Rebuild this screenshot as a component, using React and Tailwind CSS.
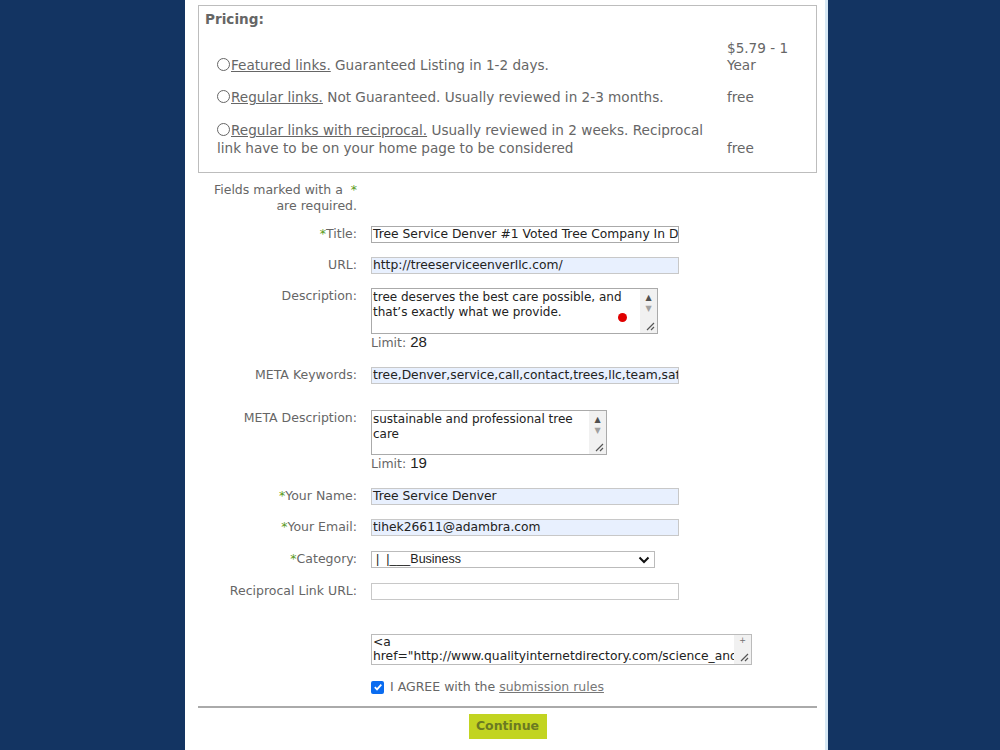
export default function App() {
    const font = { fontFamily: '"DejaVu Sans", Verdana, sans-serif' }
    const arial = { fontFamily: '"Liberation Sans", Arial, sans-serif' }
    const req = <span className="text-[#5a9a1a]">*</span>

    const Row = ({ label, children, className = '' }) => (
        <div className={`flex items-start ${className}`}>
            <div className="w-[161px] shrink-0 pr-[2px] text-right text-[12.5px] text-[#666] leading-[16px]">{label}</div>
            <div className="ml-[12px]">{children}</div>
        </div>
    )

    const Radio = () => (
        <span className="inline-block w-[13px] h-[13px] rounded-full border border-[#666] align-[-1px] mr-[1px]"></span>
    )

    const ScrollBar = () => (
        <>
            <div className="absolute right-0 top-0 bottom-0 w-[17px] bg-[#f1f1f1] flex flex-col items-center pt-[3px] text-[#a0a0a0] text-[8px] leading-[11px]">
                <span className="text-[#505050]">▲</span>
                <span>▼</span>
            </div>
            <svg className="absolute right-[2px] bottom-[2px]" width="10" height="10" viewBox="0 0 10 10">
                <path d="M9 2 L2 9 M9 6 L6 9" stroke="#555" strokeWidth="1.2" />
            </svg>
        </>
    )

    return (
        <div className="min-h-[750px] bg-[#133462] flex" style={font}>
            <div className="ml-[185px] w-[643px] bg-white border-r-[3px] border-[#d6e8f5] pl-[13px] pr-[8px] pt-[5px] pb-[20px]">
                <div className="border border-[#bdbdbd] px-[6px] pt-[5px] pb-[15px] text-[13.6px] text-[#666]">
                    <div className="font-bold leading-[16px]">Pricing:</div>
                    <div className="mt-[13px] flex flex-col gap-[15px]">
                        <div className="flex items-end pl-[12px] leading-[17px]">
                            <div className="w-[510px]">
                                <Radio />
                                <span className="underline">Featured links.</span> Guaranteed Listing in 1-2 days.
                            </div>
                            <div className="w-[80px]">$5.79 - 1<br />Year</div>
                        </div>
                        <div className="flex items-end pl-[12px] leading-[17px]">
                            <div className="w-[510px]">
                                <Radio />
                                <span className="underline">Regular links.</span> Not Guaranteed. Usually reviewed in 2-3 months.
                            </div>
                            <div className="w-[80px]">free</div>
                        </div>
                        <div className="flex items-end pl-[12px] leading-[18px]">
                            <div className="w-[510px]">
                                <Radio />
                                <span className="underline">Regular links with reciprocal.</span> Usually reviewed in 2 weeks. Reciprocal<br />
                                link have to be on your home page to be considered
                            </div>
                            <div className="w-[80px]">free</div>
                        </div>
                    </div>
                </div>

                <div className="mt-[9px] w-[161px] pr-[2px] text-right text-[12.5px] text-[#666] leading-[16px] whitespace-pre">
                    {'Fields marked with a  '}{req}<br />are required.
                </div>

                <div className="mt-[12px] flex flex-col">
                    <Row label={<>{req}Title:</>}>
                        <div className="w-[308px] h-[17px] border border-[#aaa] bg-white text-[12.3px] text-[#222] px-[1px] leading-[15px] overflow-hidden whitespace-nowrap">Tree Service Denver #1 Voted Tree Company In Denver</div>
                    </Row>
                    <Row label="URL:" className="mt-[14px]">
                        <div className="w-[308px] h-[17px] border border-[#c8c8c8] bg-[#e8f0fe] text-[12.3px] text-[#222] px-[1px] leading-[15px] overflow-hidden whitespace-nowrap">http://treeserviceenverllc.com/</div>
                    </Row>
                    <Row label="Description:" className="mt-[14px]">
                        <div className="relative w-[287px] h-[46px] border border-[#aaa] bg-white text-[12px] text-[#222] pl-[1px] pr-[20px] pt-[1px] leading-[15px]">
                            tree deserves the best care possible, and that’s exactly what we provide.
                            <span className="absolute left-[246px] top-[24px] w-[9px] h-[9px] rounded-full bg-[#e00000]"></span>
                            <ScrollBar />
                        </div>
                        <div className="text-[12.5px] text-[#666] leading-[16px]">Limit: <span className="text-[15px] text-[#222]" style={arial}>28</span></div>
                    </Row>
                    <Row label="META Keywords:" className="mt-[16px]">
                        <div className="w-[308px] h-[17px] border border-[#c8c8c8] bg-[#e8f0fe] text-[12.3px] text-[#222] px-[1px] leading-[15px] overflow-hidden whitespace-nowrap">tree,Denver,service,call,contact,trees,llc,team,safety</div>
                    </Row>
                    <Row label="META Description:" className="mt-[26px]">
                        <div className="relative w-[236px] h-[45px] border border-[#aaa] bg-white text-[12px] text-[#222] pl-[1px] pr-[20px] pt-[1px] leading-[15px]">
                            sustainable and professional tree care
                            <ScrollBar />
                        </div>
                        <div className="text-[12.5px] text-[#666] leading-[16px]">Limit: <span className="text-[15px] text-[#222]" style={arial}>19</span></div>
                    </Row>
                    <Row label={<>{req}Your Name:</>} className="mt-[16px]">
                        <div className="w-[308px] h-[17px] border border-[#c8c8c8] bg-[#e8f0fe] text-[12.3px] text-[#222] px-[1px] leading-[15px] overflow-hidden whitespace-nowrap">Tree Service Denver</div>
                    </Row>
                    <Row label={<>{req}Your Email:</>} className="mt-[14px]">
                        <div className="w-[308px] h-[17px] border border-[#c8c8c8] bg-[#e8f0fe] text-[12.3px] text-[#222] px-[1px] leading-[15px] overflow-hidden whitespace-nowrap">tihek26611@adambra.com</div>
                    </Row>
                    <Row label={<>{req}Category:</>} className="mt-[15px]">
                        <div className="w-[284px] h-[17px] border border-[#bbb] bg-white text-[12.5px] text-[#222] pl-[4px] pr-[4px] leading-[15px] flex items-center justify-between" style={arial}>
                            <span className="whitespace-pre">|  |___Business</span>
                            <svg width="12" height="8" viewBox="0 0 12 8">
                                <path d="M1.5 1.5 L6 6 L10.5 1.5" stroke="#111" strokeWidth="2" fill="none" />
                            </svg>
                        </div>
                    </Row>
                    <Row label="Reciprocal Link URL:" className="mt-[15px]">
                        <div className="w-[308px] h-[17px] border border-[#c8c8c8] bg-white"></div>
                    </Row>
                    <Row label="" className="mt-[34px]">
                        <div className="relative w-[381px] h-[31px] border border-[#bbb] bg-white text-[12.3px] text-[#222] pl-[1px] pr-[22px] leading-[14px] overflow-hidden">
                            &lt;a<br />
                            <span className="whitespace-nowrap">href="http://www.qualityinternetdirectory.com/science_and_technology/"</span>
                            <div className="absolute right-0 top-0 bottom-0 w-[17px] bg-[#f1f1f1] flex flex-col items-center text-[#707070] text-[8px] leading-[8px] pt-[2px]">
                                <span>+</span>
                            </div>
                            <svg className="absolute right-[2px] bottom-[2px]" width="10" height="10" viewBox="0 0 10 10">
                                <path d="M9 2 L2 9 M9 6 L6 9" stroke="#555" strokeWidth="1.2" />
                            </svg>
                        </div>
                        <div className="mt-[14px] flex items-center text-[12.5px] text-[#666] leading-[16px]">
                            <span className="w-[13px] h-[13px] rounded-[2px] bg-[#0a6cf0] flex items-center justify-center">
                                <svg width="10" height="10" viewBox="0 0 10 10">
                                    <path d="M1.8 5.2 L4 7.4 L8.3 2.6" stroke="white" strokeWidth="1.8" fill="none" />
                                </svg>
                            </span>
                            <span className="ml-[6px]">I AGREE with the <span className="underline text-[#777]">submission rules</span></span>
                        </div>
                    </Row>
                </div>

                <div className="mt-[11px] border-t-2 border-[#aaa]"></div>
                <div className="mt-[6px] flex justify-center">
                    <div className="w-[78px] h-[25px] bg-[#c2d421] text-[#6b7a22] font-bold text-[12.5px] flex items-center justify-center">Continue</div>
                </div>
            </div>
        </div>
    )
}
